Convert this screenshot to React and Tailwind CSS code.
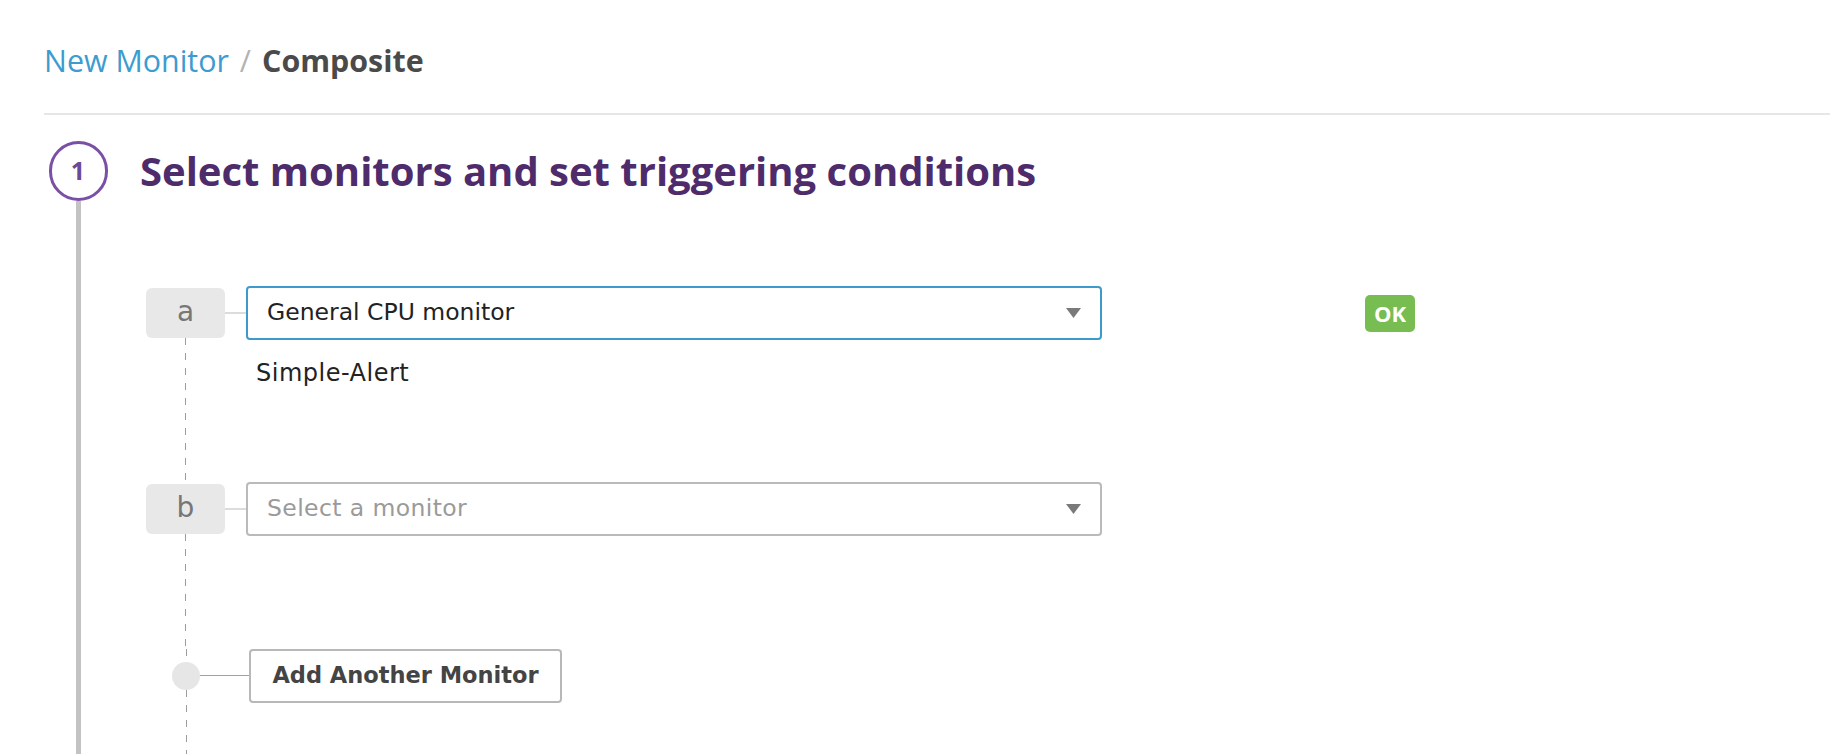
import React from "react";

const dashed =
  "w-px bg-[repeating-linear-gradient(to_bottom,#9c9c9c_0px,#9c9c9c_7px,transparent_7px,transparent_15px)]";

const Caret = () => (
  <svg width="15" height="10" viewBox="0 0 15 10" className="shrink-0">
    <path d="M0 0 L15 0 L7.5 10 Z" fill="#7a7a7a" />
  </svg>
);

const MonitorRow = ({ letter, value, placeholder, focused, status, sub, height }) => (
  <div className="flex" style={{ height }}>
    {/* letter box + dashed link down */}
    <div className="flex w-[79px] flex-col items-center">
      <div className="mt-[2px] flex h-[50px] w-full items-center justify-center rounded-[6px] bg-[#e8e8e8] pb-[2px] text-[28px] text-[#777]">
        {letter}
      </div>
      <div className={`${dashed} flex-1`} />
    </div>

    <div className="flex flex-col">
      <div className="flex h-[54px] items-center">
        <div className="h-[2px] w-[21px] bg-[#dcdcdc]" />
        <div
          className={`flex h-[54px] w-[856px] items-center justify-between rounded-[4px] border-2 bg-white pl-[19px] pr-[19px] ${
            focused ? "border-[#3c9acc]" : "border-[#bababa]"
          }`}
        >
          {value ? (
            <span className="text-[23.5px] text-[#222]">{value}</span>
          ) : (
            <span className="text-[23.5px] tracking-[0.4px] text-[#9a9a9a]">{placeholder}</span>
          )}
          <Caret />
        </div>
        {status && (
          <div className="ml-[263px] flex h-[37px] w-[50px] items-center justify-center rounded-[5px] bg-[#77bd52] font-['Open_Sans',sans-serif] text-[22px] font-bold text-white">
            {status}
          </div>
        )}
      </div>
      {sub && (
        <div className="ml-[31px] mt-[18px] text-[24px] leading-[30px] tracking-[0.5px] text-[#222]">{sub}</div>
      )}
    </div>
  </div>
);

export default function App() {
  return (
    <div className="min-h-screen overflow-hidden bg-white pl-[44px] font-['DejaVu_Sans',sans-serif]">
      {/* Breadcrumb */}
      <div className="flex items-center pt-[40px] font-['Open_Sans',sans-serif] text-[30.4px] leading-[42px]">
        <span className="text-[#3d9bd0]">New Monitor</span>
        <span className="mx-[11px] text-[#b3b3b3]">/</span>
        <span className="font-bold text-[#4a4a4a]">Composite</span>
      </div>

      <div className="mt-[31px] h-[2px] bg-[#e6e6e6]" />

      {/* Step 1 */}
      <div className="ml-[4px] mt-[26px] flex">
        <div className="flex w-[60px] flex-col items-center">
          <div className="flex h-[60px] w-[59px] items-center justify-center rounded-full border-[3px] border-[#7b4fa6] font-['Open_Sans',sans-serif] text-[25px] font-bold text-[#6c4898]">
            1
          </div>
          <div className="w-[5px] flex-1 bg-[#c3c3c3]" />
        </div>

        <div className="ml-[32px] flex flex-col">
          <div className="flex h-[60px] items-center font-['Open_Sans',sans-serif] text-[40px] font-bold text-[#4e2c6c]">
            Select monitors and set triggering conditions
          </div>

          <div className="mt-[85px] pl-[6px]">
            <MonitorRow
              letter="a"
              value="General CPU monitor"
              focused
              status="OK"
              sub="Simple-Alert"
              height={196}
            />
            <MonitorRow letter="b" placeholder="Select a monitor" height={167} />

            {/* Add another monitor */}
            <div className="flex h-[140px]">
              <div className="ml-[26px] flex w-[28px] flex-col items-center">
                <div className={`${dashed} h-[13px]`} />
                <div className="h-[28px] w-[28px] rounded-full bg-[#e6e6e6]" />
                <div className={`${dashed} flex-1`} />
              </div>
              <div className="mt-[26px] h-px w-[49px] bg-[#a0a0a0]" />
              <button className="flex h-[54px] w-[313px] items-center justify-center rounded-[4px] border-2 border-[#b8b8b8] bg-white text-[22.5px] font-bold text-[#444]">
                Add Another Monitor
              </button>
            </div>
          </div>
        </div>
      </div>
    </div>
  );
}
